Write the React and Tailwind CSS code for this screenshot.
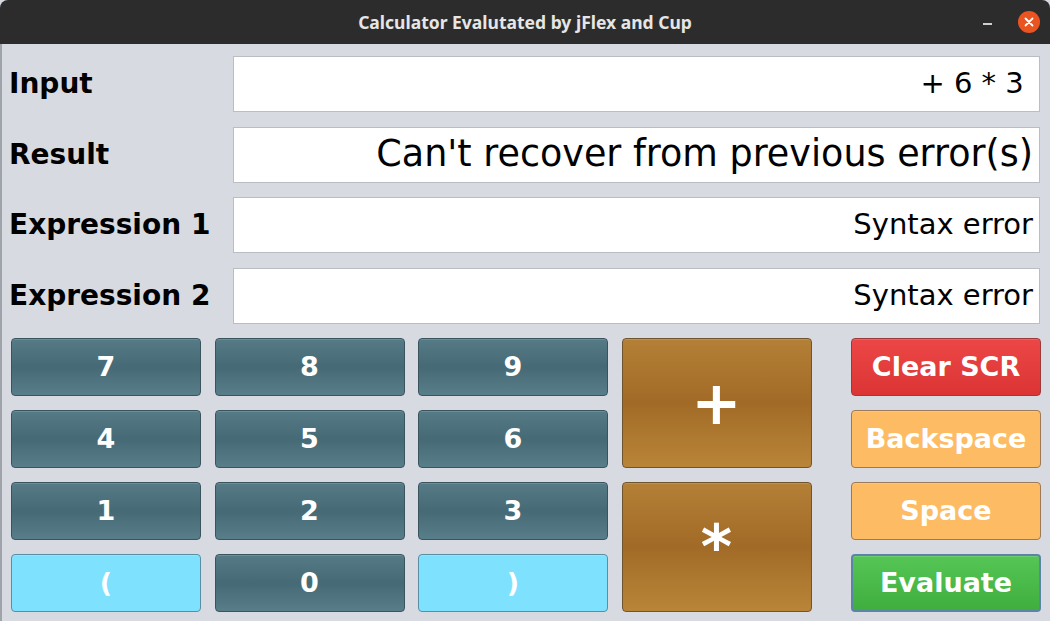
import React, { useState } from "react";

const fieldFont = { fontFamily: '"DejaVu Sans", sans-serif' };

const digitCls =
  "bg-linear-to-b from-[#557b87] via-[#466a75] to-[#587e8a] border border-[#3a545e]";
const cyanCls = "bg-[#7ee1fd] border border-[#5a8fa3]";
const opCls =
  "bg-linear-to-b from-[#b47f36] via-[#a16b27] to-[#b98538] border border-[#6f5430]";

const Key = ({ label, className, onClick }) => (
  <button
    onClick={onClick}
    className={`h-full w-full rounded-[4px] text-white font-bold text-[27px] flex items-center justify-center shadow-[inset_0_1px_0_rgba(255,255,255,0.15)] ${className}`}
    style={fieldFont}
  >
    {label}
  </button>
);

export default function App() {
  const [input, setInput] = useState("+ 6 * 3 ");
  const result = "Can't recover from previous error(s)";
  const expr1 = "Syntax error";
  const expr2 = "Syntax error";

  const add = (s) => setInput((prev) => prev + s);

  const rows = [
    { label: "Input", value: input, size: "text-[29px]" },
    { label: "Result", value: result, size: "text-[36.5px]" },
    { label: "Expression 1", value: expr1, size: "text-[29px]" },
    { label: "Expression 2", value: expr2, size: "text-[29px]" },
  ];

  return (
    <div className="w-[1050px] h-[621px] flex flex-col bg-[#d7dae1] overflow-hidden">
      {/* Title bar */}
      <div className="h-[44px] shrink-0 bg-[#2c2c2c] rounded-t-[8px] relative flex items-center justify-center">
        <span
          className="text-[#e6e6e6] font-bold text-[17.5px]"
          style={{ fontFamily: '"Noto Sans", sans-serif' }}
        >
          Calculator Evalutated by jFlex and Cup
        </span>
        <div className="absolute right-[10px] top-0 h-full flex items-center gap-[26px]">
          <div className="w-[9px] h-[2px] bg-[#cfcfcf] mt-[3px]" />
          <div className="w-[22px] h-[22px] rounded-full bg-[#e95420] flex items-center justify-center">
            <svg width="10" height="10" viewBox="0 0 10 10">
              <path d="M1.5 1.5 L8.5 8.5 M8.5 1.5 L1.5 8.5" stroke="#fff" strokeWidth="1.8" strokeLinecap="round" />
            </svg>
          </div>
        </div>
      </div>

      {/* Content */}
      <div className="flex-1 flex flex-col border-l-2 border-[#9fa3aa] pl-[7px] pr-[10px] pt-[12px]">
        <div className="flex flex-col gap-[14.5px]">
          {rows.map((r) => (
            <div key={r.label} className="flex items-center h-[56px]">
              <div
                className="w-[224px] shrink-0 font-bold text-[28px] text-black"
                style={fieldFont}
              >
                {r.label}
              </div>
              <div
                className={`flex-1 h-full bg-white border border-[#b9bdc4] flex items-center justify-end pr-[6px] whitespace-pre text-black ${r.size}`}
                style={fieldFont}
              >
                {r.value}
              </div>
            </div>
          ))}
        </div>

        {/* Keypad */}
        <div className="mt-[14.5px] ml-[2px] grid grid-cols-[190px_190px_190px_190px_216px] grid-rows-[58px_58px_58px_58px] gap-x-[13.5px] gap-y-[14px]">
          <Key label="7" className={digitCls} onClick={() => add("7")} />
          <Key label="8" className={digitCls} onClick={() => add("8")} />
          <Key label="9" className={digitCls} onClick={() => add("9")} />
          <div className="row-span-2">
            <Key label="+" className={`${opCls} text-[60px]`} onClick={() => add("+")} />
          </div>
          <div className="pl-[26px]">
            <Key label="Clear SCR" className="bg-linear-to-b from-[#ec4646] to-[#dc3434] border border-[#9a3a3a]" onClick={() => setInput("")} />
          </div>

          <Key label="4" className={digitCls} onClick={() => add("4")} />
          <Key label="5" className={digitCls} onClick={() => add("5")} />
          <Key label="6" className={digitCls} onClick={() => add("6")} />
          <div className="pl-[26px]">
            <Key label="Backspace" className="bg-[#fdbc64] border border-[#9a7a58]" onClick={() => setInput((p) => p.slice(0, -1))} />
          </div>

          <Key label="1" className={digitCls} onClick={() => add("1")} />
          <Key label="2" className={digitCls} onClick={() => add("2")} />
          <Key label="3" className={digitCls} onClick={() => add("3")} />
          <div className="row-span-2">
            <Key label="*" className={`${opCls} text-[60px]`} onClick={() => add("*")} />
          </div>
          <div className="pl-[26px]">
            <Key label="Space" className="bg-[#fdbc64] border border-[#9a7a58]" onClick={() => add(" ")} />
          </div>

          <Key label="(" className={cyanCls} onClick={() => add("(")} />
          <Key label="0" className={digitCls} onClick={() => add("0")} />
          <Key label=")" className={cyanCls} onClick={() => add(")")} />
          <div className="pl-[26px]">
            <Key label="Evaluate" className="bg-linear-to-b from-[#55c655] to-[#3fae3f] border-2 border-[#5b84a6]" />
          </div>
        </div>
      </div>
    </div>
  );
}
